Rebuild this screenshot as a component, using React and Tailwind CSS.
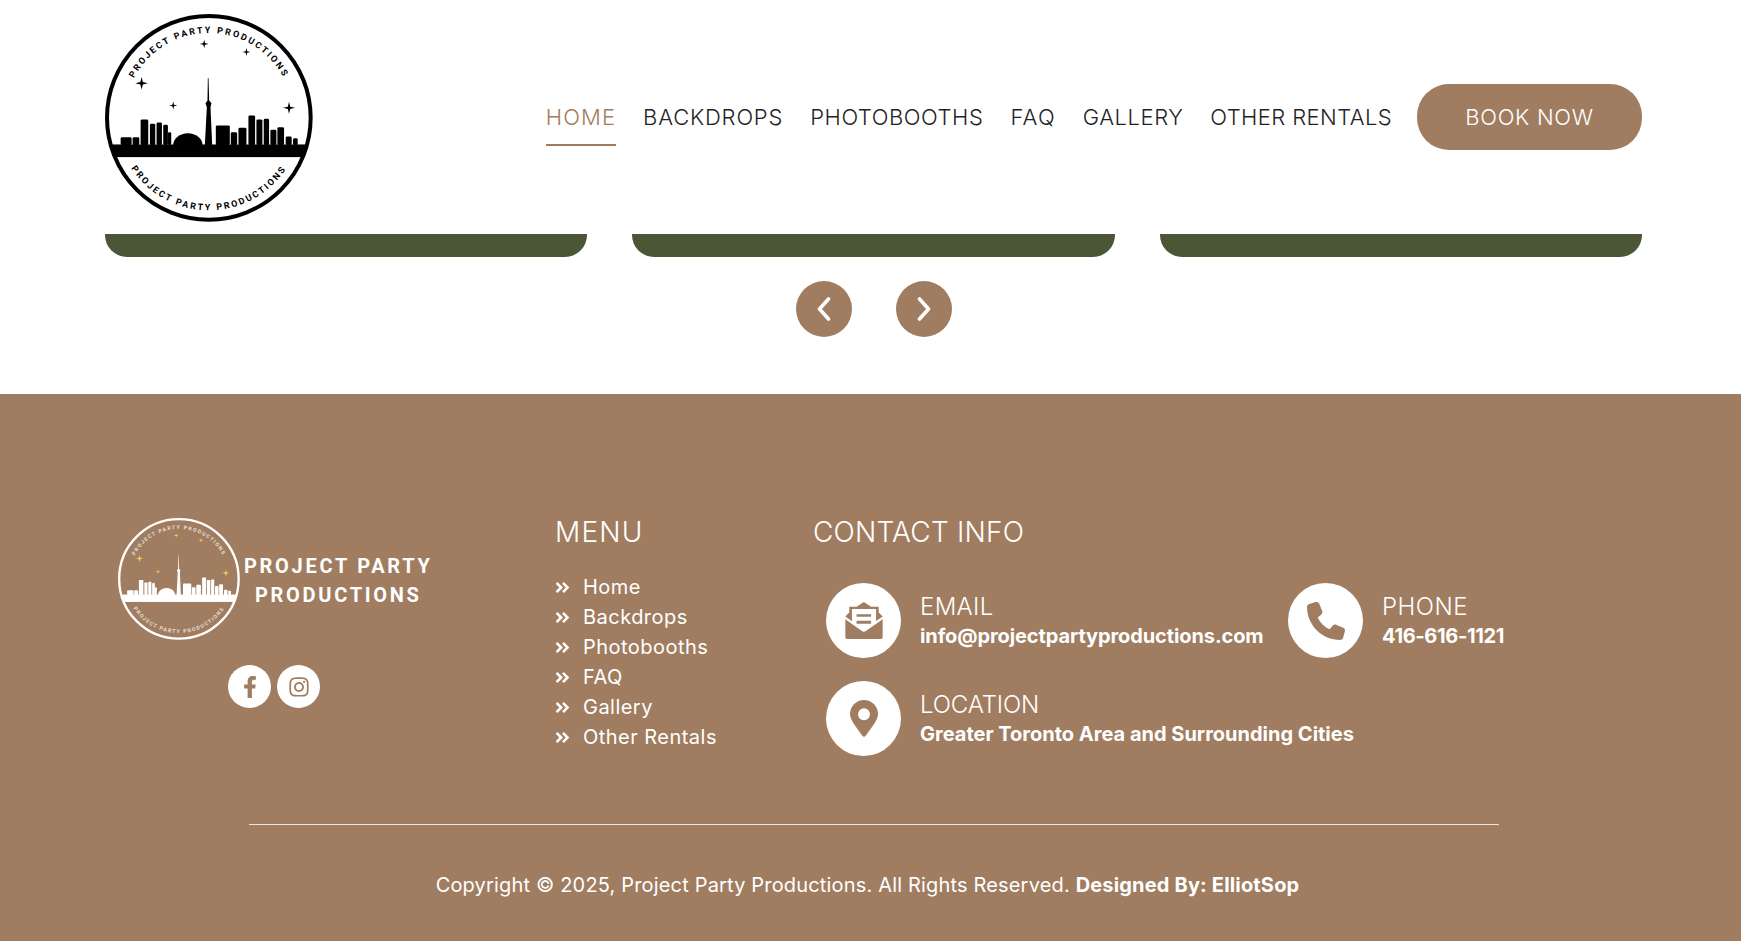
import React from "react";
import { FaAngleDoubleRight, FaFacebookF, FaInstagram } from "react-icons/fa";
import { FaPhone } from "react-icons/fa6";

const navLinks = [
  { label: "HOME", tracking: "tracking-[1.1px]" },
  { label: "BACKDROPS", tracking: "tracking-[0.8px]" },
  { label: "PHOTOBOOTHS", tracking: "tracking-[0.55px]" },
  { label: "FAQ", tracking: "tracking-[1.2px]" },
  { label: "GALLERY", tracking: "tracking-[0.55px]" },
  { label: "OTHER RENTALS", tracking: "tracking-[0.4px]" },
];
const menuLinks = ["Home", "Backdrops", "Photobooths", "FAQ", "Gallery", "Other Rentals"];

// x1, x2, top of each building, in logo units
const buildings = [
  [92, 125, 410], [128, 148, 410], [152, 175, 357], [180, 196, 370], [200, 216, 366],
  [220, 234, 373], [234, 244, 395], [378, 420, 375], [423, 442, 395], [446, 470, 382],
  [476, 496, 345], [500, 518, 357], [522, 538, 355], [542, 560, 388], [563, 583, 380],
  [588, 606, 408], [610, 624, 413],
];
const stars = [[155, 248, 19], [343, 130, 13], [470, 154, 12], [250, 315, 12], [598, 322, 18]];

function starPath(x, y, r) {
  const k = r * 0.2;
  return `M${x} ${y - r}L${x + k} ${y - k}L${x + r} ${y}L${x + k} ${y + k}L${x} ${y + r}L${x - k} ${y + k}L${x - r} ${y}L${x - k} ${y - k}Z`;
}

function Logo({ id, color, starColor, textOpacity = 1, className }) {
  return (
    <svg viewBox="45 40 625 625" className={className}>
      <defs>
        <clipPath id={`${id}-clip`}><circle cx="357" cy="352" r="306" /></clipPath>
        <path id={`${id}-top`} d="M102 352A255 255 0 0 1 612 352" />
        <path id={`${id}-bottom`} d="M79 352A278 278 0 0 0 635 352" />
      </defs>
      <circle cx="357" cy="352" r="306" fill="none" stroke={color} strokeWidth="12" />
      <rect x="45" y="432" width="625" height="38" fill={color} clipPath={`url(#${id}-clip)`} />
      {buildings.map(([x1, x2, top]) => (
        <rect key={x1} x={x1} y={top} width={x2 - x1} height={434 - top} rx="4" fill={color} />
      ))}
      <path d="M250 434A44 36 0 0 1 338 434Z" fill={color} />
      <path d="M354 232H356L358 300L365 308L362 320L367 434H345L351 320L347 308L353 300Z" fill={color} />
      {stars.map(([x, y, r]) => (
        <path key={x} d={starPath(x, y, r)} fill={starColor} />
      ))}
      <g fill={color} fillOpacity={textOpacity} fontFamily="'Roboto', sans-serif" fontWeight="700" fontSize="27" letterSpacing="6.2">
        <text textAnchor="middle"><textPath href={`#${id}-top`} startOffset="50%">PROJECT PARTY PRODUCTIONS</textPath></text>
        <text textAnchor="middle"><textPath href={`#${id}-bottom`} startOffset="50%">PROJECT PARTY PRODUCTIONS</textPath></text>
      </g>
    </svg>
  );
}

function Chevron({ d }) {
  return (
    <svg viewBox="0 0 14 24" className="h-[24px] w-[14px]" fill="none" stroke="currentColor" strokeWidth="3.6" strokeLinecap="round" strokeLinejoin="round">
      <path d={d} />
    </svg>
  );
}

function ArrowButton({ children }) {
  return (
    <button className="flex h-[56px] w-[56px] items-center justify-center rounded-full bg-[#a07d60] text-white">
      {children}
    </button>
  );
}

function EnvelopeIcon() {
  return (
    <svg viewBox="0 0 113 112" className="h-[37px] w-[38px]" fill="currentColor">
      <path d="M0 44L12 32V14H34L56 0L78 14H101V32L113 44L90 60H22Z" />
      <path d="M20 21H93V60L56 84L20 60Z" fill="#fff" />
      <path d="M34 37H78V45H34ZM34 57H78V66H34Z" />
      <path d="M0 52L50 88Q56 92 62 88L113 52V106Q113 112 107 112H6Q0 112 0 106Z" />
    </svg>
  );
}

function PinIcon() {
  return (
    <svg viewBox="0 0 85 112" className="h-[37px] w-[28px]">
      <path fill="currentColor" d="M42.5 0C66 0 85 19 85 42.5C85 58 72 76 47 109Q42.5 114 38 109C13 76 0 58 0 42.5C0 19 19 0 42.5 0Z" />
      <circle cx="42.5" cy="43" r="18" fill="#fff" />
    </svg>
  );
}

function ContactItem({ icon, label, value, labelClass, valueClass, className }) {
  return (
    <div className={`flex items-center gap-[19px] ${className || ""}`}>
      <div className="flex h-[75px] w-[75px] shrink-0 items-center justify-center rounded-full bg-white text-[38px] text-[#a07d60]">
        {icon}
      </div>
      <div>
        <div className={`text-[24px] font-light leading-[30px] ${labelClass}`}>{label}</div>
        <div className={`text-[20px] font-bold leading-[28px] ${valueClass}`}>{value}</div>
      </div>
    </div>
  );
}

export default function App() {
  return (
    <div className="flex h-[941px] flex-col overflow-hidden bg-white font-['Inter',sans-serif]">
      <header className="flex h-[234px] shrink-0 items-start justify-between pl-[105px] pr-[99px] pt-[14px]">
        <Logo id="head" color="#000" starColor="#000" className="h-[208px] w-[208px]" />
        <nav className="mt-[70px] flex items-start">
          <div className="mr-[25px] flex gap-[27px] text-[22px] font-[350] text-[#1f2328]">
            {navLinks.map((link) => (
              <a
                key={link.label}
                className={link.label === "HOME"
                  ? `flex h-[62px] items-center border-b-2 border-[#a07d60] pt-[6px] text-[#a07d60] ${link.tracking}`
                  : `flex h-[62px] items-center border-b-2 border-transparent pt-[6px] ${link.tracking}`}
              >
                {link.label}
              </a>
            ))}
          </div>
          <a className="flex h-[66px] w-[225px] items-center justify-center rounded-[32px] bg-[#a07d60] text-[22px] font-[350] tracking-[0.7px] text-white">
            BOOK NOW
          </a>
        </nav>
      </header>

      <div className="flex shrink-0 gap-[45px] pl-[105px] pr-[99px]">
        <div className="h-[23px] flex-1 rounded-b-[22px] bg-[#4b5637]" />
        <div className="h-[23px] flex-1 rounded-b-[22px] bg-[#4b5637]" />
        <div className="h-[23px] flex-1 rounded-b-[22px] bg-[#4b5637]" />
      </div>

      <div className="mt-[24px] flex shrink-0 justify-center gap-[44px] pl-[6px]">
        <ArrowButton><Chevron d="M11.5 2L2.5 12L11.5 22" /></ArrowButton>
        <ArrowButton><Chevron d="M2.5 2L11.5 12L2.5 22" /></ArrowButton>
      </div>

      <footer className="mt-[57px] flex-1 bg-[#a07d60] pl-[105px] pr-[105px] pt-[119px] text-white">
        <div className="flex">
          <div className="w-[450px] shrink-0 pl-[13px] pt-[5px]">
            <div className="flex items-center gap-[4px]">
              <Logo id="foot" color="#fff" starColor="#f3d25a" textOpacity={0.75} className="h-[122px] w-[122px]" />
              <div className="pt-[4px] text-center text-[20px] font-bold leading-[29px] tracking-[2.7px] font-['Roboto',sans-serif]">
                PROJECT PARTY<br />PRODUCTIONS
              </div>
            </div>
            <div className="ml-[110px] mt-[25px] flex gap-[6px]">
              <a className="flex h-[43px] w-[43px] items-center justify-center rounded-full bg-white text-[22px] text-[#a07d60]"><FaFacebookF /></a>
              <a className="flex h-[43px] w-[43px] items-center justify-center rounded-full bg-white text-[22px] text-[#a07d60]"><FaInstagram /></a>
            </div>
          </div>

          <div className="w-[258px] shrink-0">
            <h3 className="text-[28px] font-light leading-[38px] tracking-[1.2px]">MENU</h3>
            <ul className="mt-[21px]">
              {menuLinks.map((link) => (
                <li key={link} className="flex h-[30px] items-center gap-[12px] text-[20px] tracking-[0.47px]">
                  <FaAngleDoubleRight className="-ml-[1px] h-[17px] w-[17px]" />
                  {link}
                </li>
              ))}
            </ul>
          </div>

          <div>
            <h3 className="text-[28px] font-light leading-[38px] tracking-[0.2px]">CONTACT INFO</h3>
            <div className="ml-[13px] mt-[32px] grid grid-cols-[462px_auto] gap-y-[23px]">
              <ContactItem icon={<EnvelopeIcon />} label="EMAIL" value="info@projectpartyproductions.com" labelClass="tracking-[0.35px]" valueClass="tracking-[-0.1px]" />
              <ContactItem icon={<FaPhone />} label="PHONE" value="416-616-1121" labelClass="tracking-[0.5px]" valueClass="tracking-[-0.35px]" />
              <ContactItem className="col-span-2" icon={<PinIcon />} label="LOCATION" value="Greater Toronto Area and Surrounding Cities" labelClass="tracking-[-0.15px]" valueClass="tracking-[0px]" />
            </div>
          </div>
        </div>

        <div className="ml-[144px] mt-[68px] h-px w-[1250px] bg-white/80" />
        <p className="mt-[45px] pr-[6px] text-center text-[20px] leading-[30px] tracking-[0.17px]">
          Copyright © 2025, Project Party Productions. All Rights Reserved. <strong className="font-bold">Designed By: ElliotSop</strong>
        </p>
      </footer>
    </div>
  );
}
